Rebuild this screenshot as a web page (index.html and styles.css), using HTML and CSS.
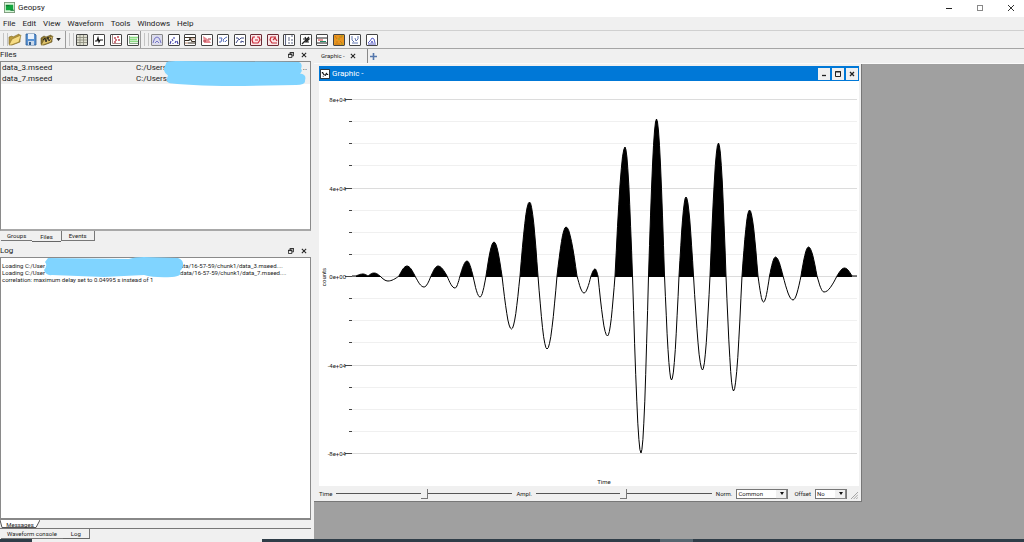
FILE: index.html
```html
<!DOCTYPE html>
<html lang="en">
<head>
<meta charset="utf-8">
<title>Geopsy</title>
<link rel="stylesheet" href="styles.css">
</head>
<body>
<div class="app">
  <header class="titlebar">
    <svg class="logo" viewBox="0 0 12 12"><rect x="0.5" y="0.5" width="11" height="11" fill="#d8f5d8" stroke="#7a9a7a"/><rect x="2" y="3" width="8" height="6" fill="#12a53c"/><path d="M2 4h4M7 9h4" stroke="#0b6b2a"/></svg>
    <h1 class="app-name">Geopsy</h1>
    <div class="window-buttons">
      <button class="win-btn" aria-label="Minimize"><svg viewBox="0 0 8 8"><path d="M1 4.500h6" stroke="#222"/></svg></button>
      <button class="win-btn" aria-label="Maximize"><svg viewBox="0 0 8 8"><rect x="1.500" y="1.500" width="5" height="5" fill="none" stroke="#888"/></svg></button>
      <button class="win-btn" aria-label="Close"><svg viewBox="0 0 8 8"><path d="M1 1l6 6M7 1l-6 6" stroke="#333"/></svg></button>
    </div>
  </header>

  <nav class="menubar">
    <button class="menu">File</button><button class="menu">Edit</button><button class="menu">View</button><button class="menu">Waveform</button><button class="menu">Tools</button><button class="menu">Windows</button><button class="menu">Help</button>
  </nav>

  <div class="toolbar">
    <div class="tool-group file-tools">
      <button class="tool-plain" aria-label="Open"><svg viewBox="0 0 14 13"><path d="M1 11V4l3-1 1 1 6-3 1 2v6l-8 3z" fill="#b99a3c" stroke="#7c6420" stroke-width=".6"/><path d="M1 12l3-6 9-4-2 7-8 3z" fill="#f7dc84" stroke="#8a7027" stroke-width=".6"/></svg></button>
      <button class="tool-plain" aria-label="Save"><svg viewBox="0 0 14 13"><path d="M2 1h9l1 1v10H2z" fill="#5b93d3" stroke="#2f5d96" stroke-width=".8"/><path d="M4 1h6v5H4z" fill="#eaf2fc"/><path d="M4 8h6v4H4z" fill="#c9d8ea"/><path d="M5 9h2v3H5z" fill="#34608f"/></svg></button>
      <button class="tool-plain" aria-label="Import"><svg viewBox="0 0 14 13"><path d="M1 11V5l3-2 2 1 5-2 1 2v5l-8 3z" fill="#8d7731" stroke="#5d4d1b" stroke-width=".6"/><path d="M1 12l3-5 9-4-2 6-8 3z" fill="#dcc06a" stroke="#6f5a20" stroke-width=".6"/><path d="M3 7l2-2 1 4 2-5 1 4 2-3" fill="none" stroke="#222" stroke-width=".9"/></svg></button>
      <button class="tool-arrow" aria-label="Import options"><svg viewBox="0 0 6 4"><path d="M0 0h6L3 4z" fill="#222"/></svg></button>
    </div>
    <div class="tool-group view-tools">
      <button class="tool" aria-label="Table"><svg viewBox="0 0 10 10"><path d="M0 0h10v10H0z" fill="#deded0"/><path d="M0 2.500h10M0 5h10M0 7.500h10M3 0v10M6.500 0v10" stroke="#888878" stroke-width=".8"/></svg></button>
      <button class="tool" aria-label="Graphic"><svg viewBox="0 0 10 10"><path d="M1 6h2l1-3 1 4 1-2h3" fill="none" stroke="#111" stroke-width="1.200"/></svg></button>
      <button class="tool" aria-label="Map"><svg viewBox="0 0 10 10"><path d="M1.500 0v8.500H10" fill="none" stroke="#a88"/><path d="M3 3h2M6 2h2M4 5h2M7 5h2M3 7h2" stroke="#c44a55" stroke-width="1.300"/></svg></button>
      <button class="tool" aria-label="Chronogram"><svg viewBox="0 0 10 10"><path d="M1.500 1v7.500H10" fill="none" stroke="#8a8"/><path d="M2 2.500h8M2 4.500h7M2 6.500h8" stroke="#8cdc84" stroke-width="1.300"/></svg></button>
    </div>
    <div class="tool-group process-tools">
      <button class="tool pressed" aria-label="Spectrum"><svg viewBox="0 0 10 10"><path d="M1 8l1-3 1-2 2-1 2 1 1 2 1 3M3 8l2-2 2 2" fill="none" stroke="#7878c8"/></svg></button>
      <button class="tool" aria-label="Array"><svg viewBox="0 0 10 10"><path d="M1 9l1-3M3 4l1 2M5 2v2M6 8l1-2M8 6l1 3M4 8v1" stroke="#4545a8" stroke-width="1.100"/></svg></button>
      <button class="tool" aria-label="Records"><svg viewBox="0 0 10 10"><path d="M0 2.500h10M0 5.500h4l1-2 2 3h3M3 8h7" fill="none" stroke="#3a3024" stroke-width="1.200"/><path d="M0 8h3M6 4h4" stroke="#b5846a"/></svg></button>
      <button class="tool" aria-label="Arrivals"><svg viewBox="0 0 10 10"><path d="M1 1l6 4 2 3H2z" fill="#e58b92"/><path d="M1 6h3M6 4h3" stroke="#a82c3c"/></svg></button>
      <button class="tool" aria-label="Filter"><svg viewBox="0 0 10 10"><path d="M1 3h3l-1 4H1M6 7l-1-2 2-2 2-1M7 7l2-2" fill="none" stroke="#5a70bc"/></svg></button>
      <button class="tool" aria-label="Smooth"><svg viewBox="0 0 10 10"><path d="M1 3h2l1 2 2-2h3M1 8l2-3M6 8V6l3 1" fill="none" stroke="#434c88"/></svg></button>
      <button class="tool red" aria-label="Rotate"><svg viewBox="0 0 10 10"><path d="M4 2H2L1 5l1 3h5l2-3-1-3H6M4 5h3" fill="none" stroke="#cd2638" stroke-width="1.200"/></svg></button>
      <button class="tool red" aria-label="Correlation"><svg viewBox="0 0 10 10"><path d="M8 2H3L2 5l2 3h5M5 5l2-2 2 3" fill="none" stroke="#c52c38" stroke-width="1.200"/></svg></button>
      <button class="tool" aria-label="Grid"><svg viewBox="0 0 10 10"><path d="M1.500 0v10M4 3h2M7 1h2M4 5h2M8 4v2M4 8h2M7 8h2" stroke="#626a88" stroke-width="1.100"/></svg></button>
      <button class="tool" aria-label="Particle motion"><svg viewBox="0 0 10 10"><path d="M1 9l3-3 4-4M2 4h6L5 7h3M4 2l2 4" fill="none" stroke="#222" stroke-width="1.200"/></svg></button>
      <button class="tool" aria-label="Stack"><svg viewBox="0 0 10 10"><path d="M0 3h10M0 8h10" stroke="#222"/><path d="M1 5h5" stroke="#d3373b"/><path d="M3 6.500h6" stroke="#1e8860"/></svg></button>
      <button class="tool" aria-label="Spectrogram"><svg viewBox="0 0 10 10"><path d="M0 0h10v10H0z" fill="#e89520"/><path d="M1 1l2 3M5 2h3M2 7h2M6 6l2 2M1 9h5" stroke="#c97a12"/><path d="M4 4h2M7 1h2M7 9h2" stroke="#8fa32a"/></svg></button>
      <button class="tool" aria-label="Spectral ratio"><svg viewBox="0 0 10 10"><path d="M2 1v4l2 2M5 3l1 3 2-2V1M2 8h6" fill="none" stroke="#6578b0"/></svg></button>
      <button class="tool" aria-label="Dispersion"><svg viewBox="0 0 10 10"><path d="M1 8l2-2 2-3 2 1 1 4M4 8l1-2 1 2M1 9h8" fill="none" stroke="#5b5fc4"/></svg></button>
    </div>
  </div>

  <main class="workspace">
    <aside class="docks">
      <section class="dock">
        <div class="dock-title"><h2>Files</h2><button class="dock-btn" aria-label="Float files"><svg viewBox="0 0 7 7"><path d="M2.500 3V.5h4v4H4.500M.5 2.500h4v4h-4zM2 1h5M0 3h5" fill="none" stroke="#222"/></svg></button><button class="dock-btn" aria-label="Close files"><svg viewBox="0 0 7 7"><path d="M1 1l5 5M6 1L1 6" stroke="#222" stroke-width="1.200"/></svg></button></div>
        <div class="file-list">
          <table class="files">
            <colgroup><col class="col-name"><col><col class="col-more"></colgroup>
            <tbody>
              <tr><td>data_3.mseed</td><td>C:/Users</td><td class="more">..</td></tr>
              <tr><td>data_7.mseed</td><td>C:/Users,</td><td></td></tr>
            </tbody>
          </table>
          <svg class="mask files-mask" viewBox="0 0 142 27" preserveAspectRatio="none"><path d="M2 3Q1 0 12 0L135 1Q139 2 137 8Q139 10 136 13Q143 14 141 20Q142 25 132 25L80 26Q34 26 6 23Q1 22 4 15Q-3 10 2 3z"/></svg>
        </div>
        <div class="tabs"><button class="tab">Groups</button><button class="tab current">Files</button><button class="tab edge">Events</button></div>
      </section>

      <section class="dock grow">
        <div class="dock-title"><h2>Log</h2><button class="dock-btn" aria-label="Float log"><svg viewBox="0 0 7 7"><path d="M2.500 3V.5h4v4H4.500M.5 2.500h4v4h-4zM2 1h5M0 3h5" fill="none" stroke="#222"/></svg></button><button class="dock-btn" aria-label="Close log"><svg viewBox="0 0 7 7"><path d="M1 1l5 5M6 1L1 6" stroke="#222" stroke-width="1.200"/></svg></button></div>
        <div class="log">
          <p class="log-line"><span class="log-start">Loading C:/User</span><span>ata/16-57-59/chunk1/data_3.mseed....</span></p>
          <p class="log-line"><span class="log-start">Loading C:/User</span><span>data/16-57-59/chunk1/data_7.mseed....</span></p>
          <p class="log-line">correlation: maximum delay set to 0.04995 s instead of 1</p>
          <svg class="mask log-mask" viewBox="0 0 140 21" preserveAspectRatio="none"><path d="M4 1L85 2Q90 0 100 0L134 1Q140 3 139 9Q138 13 136 14Q139 19 128 20Q110 21 100 18L60 20L8 18Q2 19 0 13Q4 8 1 5z"/></svg>
        </div>
        <div class="messages-row">
          <button class="messages-tab"><svg class="slant" viewBox="0 0 40 8" preserveAspectRatio="none"><path d="M0 0L2 7.500H36L40 0" fill="#fff" stroke="#555"/></svg><span>Messages</span></button>
        </div>
        <div class="tabs low"><button class="tab">Waveform console</button><button class="tab current edge">Log</button></div>
      </section>
    </aside>

    <section class="center">
      <div class="doc-tabs"><button class="doc-tab">Graphic -<svg viewBox="0 0 7 7"><path d="M1 1l5 5M6 1L1 6" stroke="#222" stroke-width="1.200"/></svg></button><button class="add-tab" aria-label="New tab"><svg viewBox="0 0 7 7"><path d="M0 3.500h7M3.500 0v7" stroke="#5578ad" stroke-width="1.600"/></svg></button></div>
      <div class="mdi">
        <article class="subwindow">
          <header class="sub-title">
            <svg class="sub-icon" viewBox="0 0 11 11"><path d="M.5.5h10v10H.5z" fill="#fff" stroke="#222"/><path d="M2 4h1l1 2 2 1 1-2 1 1h1M3 8h1" fill="none" stroke="#111" stroke-width="1.200"/></svg>
            <h2>Graphic -</h2>
            <button class="sub-btn" aria-label="Minimize graphic"><svg viewBox="0 0 8 8"><path d="M2 5.500h4" stroke="#222" stroke-width="1.300"/></svg></button>
            <button class="sub-btn" aria-label="Maximize graphic"><svg viewBox="0 0 8 8"><path d="M1.500 1.500h5v5h-5zM1 2h6" fill="none" stroke="#222"/></svg></button>
            <button class="sub-btn" aria-label="Close graphic"><svg viewBox="0 0 8 8"><path d="M2 2l4 4M6 2L2 6" stroke="#222" stroke-width="1.300"/></svg></button>
          </header>
          <svg class="chart" id="chart" viewBox="319 81 540 405"></svg>
          <footer class="controls">
            <label for="time">Time</label><input id="time" class="slider" type="range" min="0" max="100" value="50">
            <label for="ampl">Ampl.</label><input id="ampl" class="slider" type="range" min="0" max="100" value="50">
            <label for="norm">Norm.</label><span class="combo wide"><select id="norm"><option>Common</option></select></span>
            <label for="offset">Offset</label><span class="combo"><select id="offset"><option>No</option></select></span>
            <svg class="grip" viewBox="0 0 8 8"><path d="M0 8l8-8M3 8l5-5M6 8l2-2" stroke="#999"/></svg>
          </footer>
        </article>
      </div>
    </section>
  </main>
  <div class="taskbar"><span class="task-search"></span><span class="task-rest"></span><span class="task-active"></span></div>
</div>
<script src="app.js"></script>
</body>
</html>
```

FILE: styles.css
```css
* { box-sizing: border-box; }
body { margin: 0; font-family: Roboto, "Noto Sans", sans-serif; font-size: 8px; line-height: 12px; color: #222; }
button { font: inherit; color: inherit; background: none; border: 0; padding: 0; margin: 0; }
h1, h2, p { margin: 0; font-size: inherit; font-weight: 400; }
svg { display: block; }

.app { display: flex; flex-direction: column; height: 100vh; background: #f0f0f0; overflow: hidden; }

.titlebar { display: flex; align-items: center; height: 17px; padding: 0 9px 2px 4px; gap: 3px; background: #fff; }
.logo { width: 11px; height: 11px; }
.app-name { flex: 1; }
.window-buttons { display: flex; gap: 23px; }
.win-btn svg { width: 8px; height: 8px; }

.menubar { display: flex; align-items: center; gap: 7px; height: 14px; padding-left: 3px; border-bottom: 1px solid #d0d0d0; }

.toolbar { display: flex; height: 18px; border-bottom: 1px solid #a5a5a5; }
.tool-group { display: flex; align-items: center; padding-left: 10px; border-right: 1px solid #9c9c9c; position: relative; }
.tool-group::before { content: ""; position: absolute; left: 3px; top: 2px; bottom: 2px; width: 3px; border: solid #c4c4c4; border-width: 0 1px; }
.file-tools { width: 66px; padding-left: 8px; gap: 2px; }
.tool-plain svg { width: 14px; height: 13px; }
.tool-arrow svg { width: 5px; height: 3px; }
.view-tools { width: 75px; gap: 5px; }
.process-tools { width: 237px; justify-content: space-between; border-right: 0; }
.tool { width: 12px; height: 12px; border: 1px solid #444; border-radius: 1px; background: #fff; flex: none; }
.tool svg { width: 10px; height: 10px; }
.tool.pressed { background: #dcdcec; border-color: #888; }
.tool.red { border-color: #6b2a34; background: #fbe6e8; }

.workspace { display: flex; flex: 1; min-height: 0; }
.docks { flex: 0 0 311px; display: flex; flex-direction: column; min-height: 0; }
.dock { display: flex; flex-direction: column; }
.dock.grow { flex: 1; min-height: 0; }
.dock-title { display: flex; align-items: center; height: 12px; padding-right: 4px; gap: 7px; }
.dock-title h2 { flex: 1; }
.dock-btn svg { width: 6px; height: 6px; }

.file-list { position: relative; height: 170px; background: #fff; border: 1px solid #8a8a8a; border-bottom: 2px solid #a8a8a8; }
.files { width: 100%; border-collapse: collapse; table-layout: fixed; }
.files tr { background: #f0f0f0; height: 11px; }
.files td { padding: 0 1px; line-height: 11px; }
.col-name { width: 134px; }
.col-more { width: 20px; }
.files .more { text-align: right; padding-right: 3px; }
.mask { position: absolute; fill: #80d4ff; }
.files-mask { left: 163px; top: -1px; width: 142px; height: 26px; }

.tabs { display: flex; align-items: flex-start; height: 14px; padding-left: 1px; font-size: 6px; line-height: 9px; }
.tab { height: 10px; padding: 0 6px; border-bottom: 1px solid #777; }
.tab.current { height: 11px; padding: 0 8px; border-color: #666; }
.tab.edge { border-right: 1px solid #777; }
.tab:not(.current).edge { border-left: 1px solid #777; padding: 0 7px; }

.log { position: relative; flex: 1; min-height: 0; padding: 4px 1px; background: #fff; border: 1px solid #8a8a8a; border-bottom: 2px solid #888; font-size: 6px; line-height: 7px; }
.log-line { display: flex; white-space: nowrap; }
.log-start { width: 178px; }
.log-mask { left: 43px; top: -1px; width: 140px; height: 21px; }
.messages-row { height: 9px; border-bottom: 1px solid #777; font-size: 6px; line-height: 7px; }
.messages-tab { position: relative; display: block; width: 40px; height: 8px; }
.messages-tab span { position: relative; display: block; }
.slant { position: absolute; inset: 0; width: 100%; height: 100%; }
.tabs.low { height: 10px; }
.tabs.low .tab.current { height: 10px; }

.center { flex: 1; display: flex; flex-direction: column; min-width: 0; padding-left: 3px; }
.doc-tabs { display: flex; height: 15px; padding-left: 2px; font-size: 6px; border-bottom: 1px solid #fafafa; }
.doc-tab { display: flex; align-items: center; justify-content: space-between; width: 52px; padding: 0 11px 0 5px; border-right: 1px solid #888; }
.doc-tab svg { width: 6px; height: 6px; }
.add-tab { padding-left: 2px; }
.add-tab svg { width: 7px; height: 7px; }
.mdi { position: relative; flex: 1; background: #a0a0a0; }

.subwindow { position: absolute; left: 0; top: 0; width: 548px; padding: 2px 2px 0 5px; background: #f0f0f0; border-right: 1px solid #777; border-bottom: 1px solid #777; }
.sub-title { display: flex; align-items: center; gap: 2px; height: 15px; padding: 0 1px; background: #0078d7; color: #fff; }
.sub-title h2 { flex: 1; }
.sub-icon { width: 10px; height: 10px; }
.sub-btn { width: 12px; height: 12px; background: #f0f0f0; }
.sub-btn svg { width: 8px; height: 8px; margin: auto; }
.chart { width: 100%; height: auto; background: #fff; }
.chart text { font-size: 6px; fill: #222; }
.major { stroke: #dcdcdc; }
.minor { stroke: #f0f0f0; }
.tick { stroke: #444; }
.wave { fill: none; stroke: #000; stroke-width: 1; }
.wave-fill { fill: #000; stroke: none; }

.controls { display: flex; align-items: center; height: 15px; gap: 4px; font-size: 6px; }
.slider { appearance: none; flex: 1; min-width: 0; height: 12px; margin: 0; background: linear-gradient(#555, #555) center / 100% 1px no-repeat; }
.slider::-webkit-slider-thumb { appearance: none; width: 7px; height: 10px; background: #f0f0f0; border: solid #777; border-width: 0 1px 1px 0; }
.combo { position: relative; width: 32px; height: 10px; border: 1px solid #777; background: #fff; }
.combo.wide { width: 52px; margin-right: 2px; }
.combo select { appearance: none; display: block; width: 100%; height: 8px; padding: 0 1px; border: 0; background: none; font: inherit; line-height: 8px; color: inherit; }
.combo::after { content: ""; position: absolute; right: 0; top: 0; width: 10px; height: 8px; border: solid #888; border-width: 0 1px 1px 0; background: #f0f0f0; pointer-events: none; }
.combo::before { content: ""; position: absolute; z-index: 1; right: 3px; top: 2px; border: solid transparent; border-width: 3px 2px 0; border-top-color: #111; pointer-events: none; }
.grip { width: 7px; height: 7px; align-self: flex-end; margin: 0 1px 2px 0; }

.taskbar { display: flex; height: 3px; background: #2f3d48; }
.task-search { width: 230px; margin-left: 32px; background: #f0f0f0; }
.task-rest { width: 398px; }
.task-active { width: 33px; background: #566670; }
```

FILE: app.js
```js
const BASE = 276;
const chart = document.getElementById('chart');

// Each lobe: start x, peak x, end x, amplitude (positive is up).
const lobes = [
  [356, 363, 368, 2], [368, 374, 380, 3], [380, 388, 399, -5],
  [399, 407, 415, 10], [415, 424, 431, -11], [431, 438, 447, 10],
  [447, 455, 460, -12], [460, 467, 473, 15], [473, 480, 486, -21],
  [486, 494, 502, 34], [502, 511.5, 520, -53], [520, 529.5, 538, 74],
  [538, 547, 557, -73], [557, 566, 577, 49], [577, 584, 591, -17],
  [591, 595, 598, 7], [598, 607.5, 615, -60], [615, 625, 632.5, 129],
  [632.5, 641, 648.5, -177], [648.5, 656.5, 664.5, 157], [664.5, 671.5, 679, -104],
  [679, 686, 693.5, 79], [693.5, 702.5, 710, -94], [710, 718.5, 726, 133],
  [726, 733.5, 742, -115], [742, 749.5, 758, 66], [758, 763.5, 769.5, -26],
  [769.5, 775.5, 783, 19], [783, 793, 801, -24], [801, 808.5, 817, 29],
  [817, 824, 837, -16], [837, 844.5, 852, 8]
];

function lobePath([a, p, b, h]) {
  const y = v => (BASE - v).toFixed(1);
  let d = '';
  for (let i = 1; i <= 16; i++) {
    const t = i / 16;
    const x = t < 0.5 ? a + (p - a) * t * 2 : p + (b - p) * (t * 2 - 1);
    d += `L${x.toFixed(1)} ${y(h * Math.sin(Math.PI * t))}`;
  }
  return d;
}

let svg = '';
for (let i = 0; i <= 16; i++) {
  const y = 99.5 + Math.round(i * 22.125);
  const major = i % 4 === 0;
  svg += `<path class="${major ? 'major' : 'minor'}" d="M352 ${y}H857"/>`;
  svg += `<path class="tick" d="M${major ? 345 : 349} ${y}H352"/>`;
}
['8e+04', '4e+04', '0e+00', '-4e+04', '-8e+04'].forEach((label, i) => {
  svg += `<text x="346" y="${102 + Math.round(i * 88.5)}" text-anchor="end">${label}</text>`;
});
svg += '<text x="604" y="484" text-anchor="middle">Time</text>';
svg += '<text transform="translate(326 277) rotate(-90)" text-anchor="middle">counts</text>';

let line = `M352 ${BASE}H356`;
for (const lobe of lobes) {
  line += lobePath(lobe);
  if (lobe[3] > 0) svg += `<path class="wave-fill" d="M${lobe[0]} ${BASE + 1}V${BASE}${lobePath(lobe)}V${BASE + 1}z"/>`;
}
svg += `<path class="wave" d="${line}H857"/>`;
chart.innerHTML = svg;
```
